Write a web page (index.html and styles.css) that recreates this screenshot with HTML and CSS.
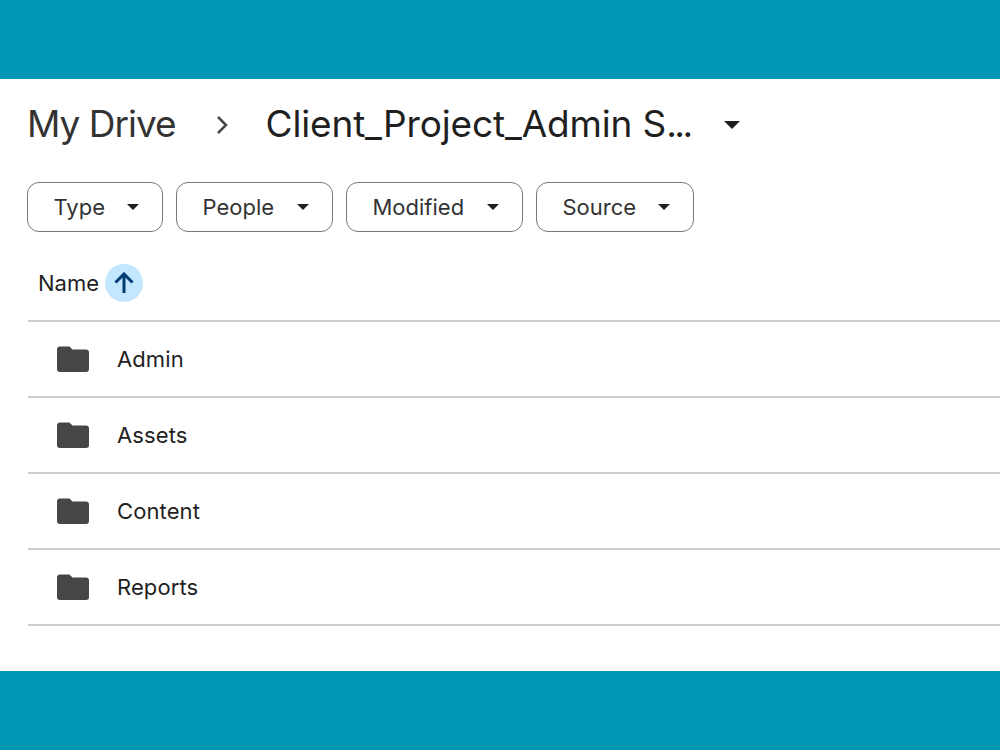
FILE: index.html
```html
<!DOCTYPE html>
<html lang="en">
<head>
    <meta charset="UTF-8">
    <meta name="viewport" content="width=device-width, initial-scale=1.0">
    <title>My Drive</title>
    <link rel="stylesheet" href="styles.css">
</head>
<body>

    <main class="drive">
        <nav class="breadcrumb">
            <span class="crumb">My Drive</span>
            <svg class="chevron" width="12" height="20" viewBox="0 0 12 20"><path d="M2 2l8 8-8 8"/></svg>
            <span class="crumb current">Client_Project_Admin S<span class="dots">...</span></span>
            <svg class="caret caret-large" width="16" height="8" viewBox="0 0 16 8"><path d="M0 0h16L8 8z"/></svg>
        </nav>

        <div class="filters">
            <button class="chip type">
                <span>Type</span>
                <svg class="caret" width="12" height="6" viewBox="0 0 12 6"><path d="M0 0h12L6 6z"/></svg>
            </button>
            <button class="chip people">
                <span>People</span>
                <svg class="caret" width="12" height="6" viewBox="0 0 12 6"><path d="M0 0h12L6 6z"/></svg>
            </button>
            <button class="chip modified">
                <span>Modified</span>
                <svg class="caret" width="12" height="6" viewBox="0 0 12 6"><path d="M0 0h12L6 6z"/></svg>
            </button>
            <button class="chip source">
                <span>Source</span>
                <svg class="caret" width="12" height="6" viewBox="0 0 12 6"><path d="M0 0h12L6 6z"/></svg>
            </button>
        </div>

        <div class="list-header">
            <span class="column-name">Name</span>
            <span class="sort">
                <svg width="20" height="22" viewBox="0 0 20 22"><path d="M10 21V2.500M1.500 10.500L10 2l8.500 8.500"/></svg>
            </span>
        </div>

        <ul class="files">
            <li class="row">
                <svg class="folder" width="32" height="26" viewBox="0 0 32 26"><path d="M3 0.500h9.500l3 3H29a3 3 0 0 1 3 3V23a3 3 0 0 1-3 3H3a3 3 0 0 1-3-3V3.500a3 3 0 0 1 3-3z"/></svg>
                <span>Admin</span>
            </li>
            <li class="row">
                <svg class="folder" width="32" height="26" viewBox="0 0 32 26"><path d="M3 0.500h9.500l3 3H29a3 3 0 0 1 3 3V23a3 3 0 0 1-3 3H3a3 3 0 0 1-3-3V3.500a3 3 0 0 1 3-3z"/></svg>
                <span>Assets</span>
            </li>
            <li class="row">
                <svg class="folder" width="32" height="26" viewBox="0 0 32 26"><path d="M3 0.500h9.500l3 3H29a3 3 0 0 1 3 3V23a3 3 0 0 1-3 3H3a3 3 0 0 1-3-3V3.500a3 3 0 0 1 3-3z"/></svg>
                <span>Content</span>
            </li>
            <li class="row">
                <svg class="folder" width="32" height="26" viewBox="0 0 32 26"><path d="M3 0.500h9.500l3 3H29a3 3 0 0 1 3 3V23a3 3 0 0 1-3 3H3a3 3 0 0 1-3-3V3.500a3 3 0 0 1 3-3z"/></svg>
                <span>Reports</span>
            </li>
        </ul>
    </main>

</body>
</html>
```
FILE: styles.css
```css
* {
    box-sizing: border-box;
}

body {
    margin: 0;
    padding: 79px 0;
    height: 750px;
    background: #0097b4;
    font-family: Inter, Roboto, sans-serif;
    color: #1f1f1f;
    overflow: hidden;
}

.drive {
    height: 592px;
    padding-left: 27px;
    background: white;
}

/* Breadcrumb */
.breadcrumb {
    display: flex;
    align-items: center;
    height: 92px;
    font-size: 37px;
    font-weight: 400;
    white-space: nowrap;
}

.crumb {
    width: 149px;
    padding-bottom: 3px;
    letter-spacing: -1px;
    color: #333;
}

.crumb.current {
    width: 424px;
    margin-left: 37.5px;
    letter-spacing: -0.15px;
    color: #1f1f1f;
}

.dots {
    letter-spacing: -2.5px;
}

.chevron {
    margin-left: 40px;
    fill: none;
    stroke: #444746;
    stroke-width: 2.5;
}

.caret {
    fill: #1f1f1f;
}

.caret-large {
    margin-left: 34.5px;
}

/* Filter chips */
.filters {
    display: flex;
    gap: 13px;
    padding-top: 11px;
}

.chip {
    display: flex;
    align-items: center;
    justify-content: space-between;
    height: 50px;
    padding: 0 23px 0 25.5px;
    border: 1px solid #747775;
    border-radius: 12px;
    background: white;
    font-family: inherit;
    font-size: 22px;
    color: #333;
}

.type {
    width: 136px;
}

.people {
    width: 157px;
}

.modified {
    width: 177px;
}

.source {
    width: 158px;
}

/* File list */
.list-header {
    display: flex;
    align-items: center;
    height: 90px;
    margin-left: 1px;
    padding: 13px 0 0 10px;
    border-bottom: 2px solid #cdcdcd;
    font-size: 22px;
}

.column-name {
    width: 67px;
}

.sort {
    display: flex;
    align-items: center;
    justify-content: center;
    width: 38px;
    height: 38px;
    border-radius: 50%;
    background: #c2e7ff;
}

.sort path {
    fill: none;
    stroke: #003d73;
    stroke-width: 3;
}

.files {
    margin: 0 0 0 1px;
    padding: 0;
    list-style: none;
}

.row {
    display: flex;
    align-items: center;
    gap: 28px;
    height: 76px;
    padding-left: 29px;
    border-bottom: 2px solid #cdcdcd;
    font-size: 22px;
    letter-spacing: 0.1px;
}

.folder {
    fill: #444746;
}
```
